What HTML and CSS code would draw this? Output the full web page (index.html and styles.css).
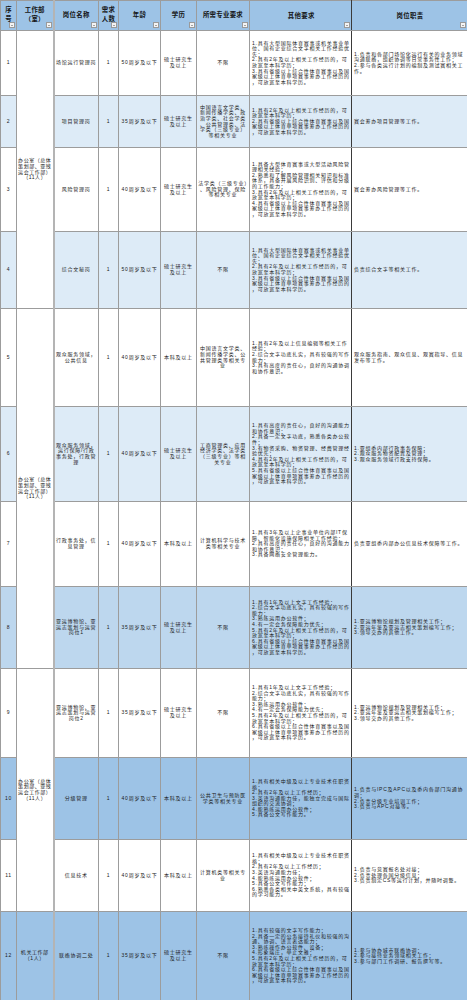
FILE: index.html
```html
<!DOCTYPE html>
<html lang="zh-CN">
<head>
<meta charset="utf-8">
<title>岗位需求表</title>
<link rel="stylesheet" href="styles.css">
</head>
<body>
<table class="jobs">
  <colgroup>
    <col class="c-seq"><col class="c-dept"><col class="c-pos"><col class="c-num"><col class="c-age"><col class="c-edu"><col class="c-major"><col class="c-other"><col class="c-duty">
  </colgroup>
  <thead>
    <tr class="head">
      <th>序<br>号<i class="flt"></i></th>
      <th>工作部<br>（室）<i class="flt"></i></th>
      <th class="pos">岗位名称<i class="flt"></i></th>
      <th>需求<br>人数<i class="flt"></i></th>
      <th>年龄<i class="flt"></i></th>
      <th>学历<i class="flt"></i></th>
      <th>所需专业要求<i class="flt"></i></th>
      <th class="other">其他要求<i class="flt"></i></th>
      <th class="duty">岗位职责<i class="flt"></i></th>
    </tr>
  </thead>
  <tbody>
    <tr class="r1">
      <td>1</td>
      <td class="dept" rowspan="4">办公室（总体策划部、亚残运会工作部）（11人）</td>
      <td class="pos">场馆运行管理岗</td>
      <td>1</td>
      <td>50周岁及以下</td>
      <td>硕士研究生及以上</td>
      <td>不限</td>
      <td class="other">1.具有大型国际体育赛事或机关事业单位、国有企业综合文字相关工作经验优先；<br>2.具有2年及以上相关工作经历的，可放宽至本科学历；<br>3.具有省级以上综合性体育赛事以及国家级以上体育单项赛事筹办工作经历的，可放宽至本科学历。</td>
      <td class="duty">1.负责和各部门场馆化运行有关的业务领域沟通联络，组织协调等日常事务性工作；<br>2.参与各类运行计划的编制及测试赛相关工作。</td>
    </tr>
    <tr class="r2 tint-light">
      <td>2</td>
      <td class="pos">项目管理岗</td>
      <td>1</td>
      <td>35周岁及以下</td>
      <td>硕士研究生及以上</td>
      <td>中国语言文学类、新闻传播学类、政治学类、社会学类、公共管理类、法学类（三级专业）等相关专业</td>
      <td class="other">1.具有2年及以上相关工作经历的，可放宽至本科学历；<br>2.具有省级以上综合性体育赛事以及国家级以上体育单项赛事筹办工作经历的，可放宽至本科学历。</td>
      <td class="duty">赛会筹办项目管理等工作。</td>
    </tr>
    <tr class="r3">
      <td>3</td>
      <td class="pos">风险管理岗</td>
      <td>1</td>
      <td>40周岁及以下</td>
      <td>硕士研究生及以上</td>
      <td>法学类（三级专业）、风险管理、保险等相关专业</td>
      <td class="other">1.具备大型体育赛事或大型活动风险管理相关经验；<br>2.熟悉和了解风险管理相关知识和标准体系，具备开展风险识别、评估和分级的工作能力；<br>3.具有2年及以上相关工作经历的，可放宽至本科学历；<br>4.具有省级以上综合性体育赛事以及国家级以上体育单项赛事筹办工作经历的，可放宽至本科学历。</td>
      <td class="duty">赛会筹办风险管理等工作。</td>
    </tr>
    <tr class="r4 tint-light">
      <td>4</td>
      <td class="pos">综合文秘岗</td>
      <td>1</td>
      <td>50周岁及以下</td>
      <td>硕士研究生及以上</td>
      <td>不限</td>
      <td class="other">1.具有大型国际体育赛事或机关事业单位、国有企业综合文字相关工作经验优先；<br>2.具有2年及以上相关工作经历的，可放宽至本科学历；<br>3.具有省级以上综合性体育赛事以及国家级以上体育单项赛事筹办工作经历的，可放宽至本科学历。</td>
      <td class="duty">负责综合文字等相关工作。</td>
    </tr>
    <tr class="r5">
      <td>5</td>
      <td class="dept" rowspan="4">办公室（总体策划部、亚残运会工作部）（11人）</td>
      <td class="pos">观众服务领域，公共信息</td>
      <td>1</td>
      <td>40周岁及以下</td>
      <td>本科及以上</td>
      <td>中国语言文学类、新闻传播学类、公共管理类等相关专业</td>
      <td class="other">1.具有2年及以上信息编辑等相关工作经验；<br>2.综合文字功底扎实，具有较强的写作能力；<br>3.具有高度的责任心，良好的沟通协调和协作意识。</td>
      <td class="duty">观众服务指南、观众信息、观赛指导、信息发布等工作。</td>
    </tr>
    <tr class="r6 tint-light">
      <td>6</td>
      <td class="pos">观众服务领域，运行保障/行政事务处，行政管理</td>
      <td>1</td>
      <td>40周岁及以下</td>
      <td>硕士研究生及以上</td>
      <td>工商管理类、应用经济学类、法学类（三级专业）等相关专业</td>
      <td class="other">1.具有高度的责任心，良好的沟通能力和协作意识；<br>2.具备一定文字功底，熟悉各类办公软件；<br>3.有物资采购、物资管理、经费管理经验优先；<br>4.具有2年及以上相关工作经历的，可放宽至本科学历；<br>5.具有省级以上综合性体育赛事以及国家级以上体育单项赛事筹办工作经历的，可放宽至本科学历。</td>
      <td class="duty">1.亚组委内部行政事务保障；<br>2.观众服务物资配置及管理；<br>3.观众服务领域行政支持保障。</td>
    </tr>
    <tr class="r7">
      <td>7</td>
      <td class="pos">行政事务处，信息管理</td>
      <td>1</td>
      <td>40周岁及以下</td>
      <td>本科及以上</td>
      <td>计算机科学与技术类等相关专业</td>
      <td class="other">1.具有3年及以上企事业单位内部IT保障、智能化设施保障相关工作经验；<br>2.具有高度的责任心，良好的沟通能力和协作意识；<br>3.具备网络安全管理能力。</td>
      <td class="duty">负责亚组委内部办公信息技术保障等工作。</td>
    </tr>
    <tr class="r8 tint-mid">
      <td>8</td>
      <td class="pos">亚运博物馆、亚运志策划与运营岗位1</td>
      <td>1</td>
      <td>35周岁及以下</td>
      <td>硕士研究生及以上</td>
      <td>不限</td>
      <td class="other">1.具有1年及以上文字工作经验；<br>2.综合文字功底扎实，具有较强的写作能力；<br>3.熟练运用办公软件；<br>4.有一定会务保障能力优先；<br>5.具有2年及以上相关工作经历的，可放宽至本科学历；<br>6.具有省级以上综合性体育赛事以及国家级以上体育单项赛事筹办工作经历的，可放宽至本科学历。</td>
      <td class="duty">1.亚运博物馆规划及管理相关工作；<br>2.亚运年鉴及亚运志相关策划编写工作；<br>3.领导交办的其他工作。</td>
    </tr>
    <tr class="r9">
      <td>9</td>
      <td class="dept" rowspan="3">办公室（总体策划部、亚残运会工作部）（11人）</td>
      <td class="pos">亚运博物馆、亚运志策划与运营岗位2</td>
      <td>1</td>
      <td>35周岁及以下</td>
      <td>硕士研究生及以上</td>
      <td>不限</td>
      <td class="other">1.具有1年及以上文字工作经验；<br>2.综合文字功底扎实，具有较强的写作能力；<br>3.熟练运用办公软件；<br>4.有一定会务保障能力优先；<br>5.具有2年及以上相关工作经历的，可放宽至本科学历；<br>6.具有省级以上综合性体育赛事以及国家级以上体育单项赛事筹办工作经历的，可放宽至本科学历。</td>
      <td class="duty">1.亚运博物馆规划及管理相关工作；<br>2.亚运年鉴及亚运志相关策划编写工作；<br>3.领导交办的其他工作。</td>
    </tr>
    <tr class="r10 tint-deep">
      <td>10</td>
      <td class="pos">分级管理</td>
      <td>1</td>
      <td>40周岁及以下</td>
      <td>本科及以上</td>
      <td>公共卫生与预防医学类等相关专业</td>
      <td class="other">1.具有相关中级及以上专业技术任职资格；<br>2.具有2年及以上工作经历；<br>3.英语沟通能力佳，能独立完成与国际组织的交流协调；<br>4.能熟练运用办公软件；<br>5.具备公文写作能力。</td>
      <td class="duty">1.负责与IPC及APC以及委内各部门沟通协调；<br>2.负责分级专业培训工作；<br>3.负责与APC对接等。</td>
    </tr>
    <tr class="r11">
      <td>11</td>
      <td class="pos">信息技术</td>
      <td>1</td>
      <td>40周岁及以下</td>
      <td>本科及以上</td>
      <td>计算机类等相关专业</td>
      <td class="other">1.具有相关中级及以上专业技术任职资格；<br>2.具有2年及以上工作经历；<br>3.英语沟通能力佳；<br>4.能熟练运用办公软件；<br>5.具备公文写作能力；<br>6.熟悉各类相关中英文系统，具有较强的学习能力。</td>
      <td class="duty">1.负责与竞赛报名处对接；<br>2.负责处理各国分级信息；<br>3.负责制定CS等运行计划，并随时调整。</td>
    </tr>
    <tr class="r12 tint-deep">
      <td>12</td>
      <td class="dept2">机关工作部（1人）</td>
      <td class="pos">联络协调二处</td>
      <td>1</td>
      <td>35周岁及以下</td>
      <td>硕士研究生及以上</td>
      <td>不限</td>
      <td class="other">1.具有较强的文字写作能力；<br>2.具备一定的公务接待礼仪和较强的沟通、协调、语言表达能力；<br>3.熟练操作办公软件、设备；<br>4.形象端庄，举止文雅；<br>5.具有2年及以上相关工作经历的，可放宽至本科学历；<br>6.具有省级以上综合性体育赛事以及国家级以上体育单项赛事筹办工作经历的，可放宽至本科学历。</td>
      <td class="duty">1.参与协办城市联络协调；<br>2.参与接待业务领域相关工作；<br>3.参与部门工作调研、报告撰写等。</td>
    </tr>
  </tbody>
</table>
</body>
</html>
```

FILE: styles.css
```css
html, body {
  margin: 0;
  padding: 0;
  background: #ffffff;
}

body {
  font-family: "Liberation Sans", "Noto Sans CJK SC", sans-serif;
  color: #1a1a1a;
}

.jobs {
  border-collapse: collapse;
  table-layout: fixed;
  width: 467px;
  font-size: 5px;
  letter-spacing: 0.75px;
  line-height: 5.6px;
}

.c-seq { width: 16px; }
.c-dept { width: 37px; }
.c-pos { width: 45px; }
.c-num { width: 20px; }
.c-age { width: 42px; }
.c-edu { width: 36px; }
.c-major { width: 53px; }
.c-other { width: 102px; }
.c-duty { width: 116px; }

.jobs th,
.jobs td {
  border: 1px solid #9c9c9c;
  padding: 0 1px;
  text-align: center;
  vertical-align: middle;
  line-break: anywhere;
  word-break: break-all;
  overflow: hidden;
}

.jobs .pos {
  border-left: 2px solid #b4b4b4;
}

.jobs th {
  position: relative;
  background: #9dc3e6;
  font-size: 6.4px;
  letter-spacing: 0.3px;
  line-height: 9px;
  font-weight: 700;
  color: #141414;
  padding-bottom: 3px;
}

.flt {
  position: absolute;
  right: 1px;
  bottom: 2px;
  width: 4px;
  height: 4px;
  background: #f4f4f4;
  border: 1px solid #9a9a9a;
}

.flt::after {
  content: "";
  position: absolute;
  left: 1px;
  top: 1.5px;
  border-left: 1px solid transparent;
  border-right: 1px solid transparent;
  border-top: 1.2px solid #555;
}

.jobs .other {
  text-align: left;
  padding: 0 0.5px 0 2px;
  border-left: 1px solid #3a3a3a;
  border-right: 1px solid #3a3a3a;
}

.jobs .duty {
  text-align: left;
  padding: 0 1px 0 2px;
  border-right: 1px solid #3a3a3a;
}

.jobs th.other,
.jobs th.duty {
  text-align: center;
}

.jobs .dept {
  background: #ffffff;
  letter-spacing: 0.55px;
  padding: 0 1px;
}

.jobs .dept2 {
  letter-spacing: 0.55px;
  padding: 0 3px;
}

.tint-light { background: #ddebf7; }
.tint-mid { background: #bdd7ee; }
.tint-deep { background: #9dc3e6; }

.head { height: 30px; }
.r1 { height: 65px; }
.r2 { height: 52px; }
.r3 { height: 84px; }
.r4 { height: 77px; }
.r5 { height: 98px; }
.r6 { height: 95px; }
.r7 { height: 85px; }
.r8 { height: 82px; }
.r9 { height: 89px; }
.r10 { height: 82px; }
.r11 { height: 72px; }
.r12 { height: 89px; }
```
